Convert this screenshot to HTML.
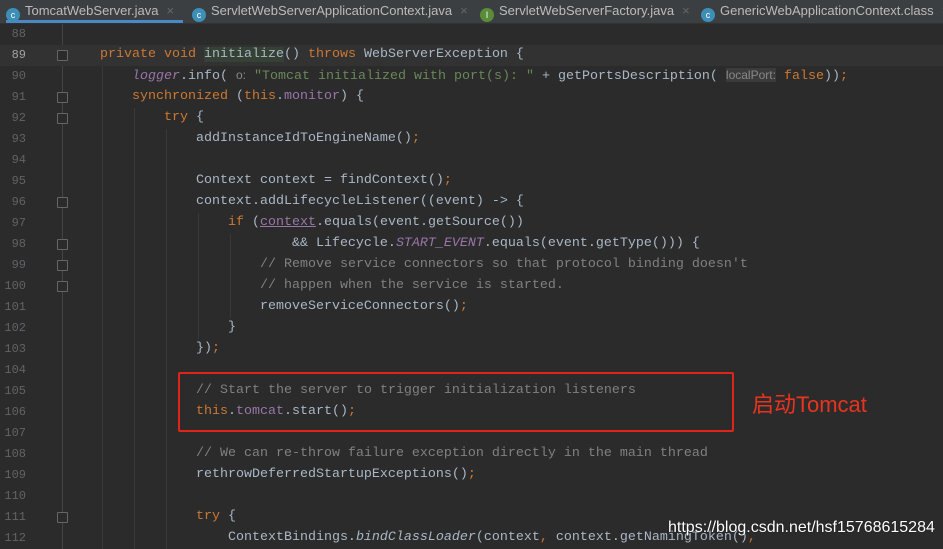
<!DOCTYPE html>
<html><head><meta charset="utf-8"><style>
body{margin:0;width:943px;height:549px;overflow:hidden;background:#2b2b2b;font-family:"Liberation Mono",monospace;}
.tabs{position:absolute;left:0;top:0;width:943px;height:23px;background:#3c3f41;border-bottom:1px solid #323232;font-family:"Liberation Sans",sans-serif;font-size:13px;color:#bbb;}
.tab{position:absolute;top:0;height:23px;line-height:22px;white-space:nowrap}
.ic{display:inline-block;width:14px;height:14px;border-radius:50%;background:#3d8fb7;vertical-align:-3px;margin-right:5px;color:#fff;font-size:9px;line-height:14px;text-align:center}
.x{color:#666;margin-left:8px}
.ln{position:absolute;left:0;width:26px;text-align:right;font-size:12px;color:#606366}
.code{position:absolute;left:0;white-space:pre;font-size:13.33px;color:#a9b7c6}
.k{color:#cc7832}.s{color:#6a8759}.c{color:#808080}.f{color:#9876aa}.i{font-style:italic}
.guide{position:absolute;width:1px;background:#393939}
.fold{position:absolute;left:57px;width:9px;height:9px;border:1px solid #666;background:#2b2b2b;border-radius:1px}
</style></head><body>
<div class="tabs">
<div class="tab" style="left:6px;width:177px;border-bottom:3px solid #4a88c7;height:20px"><span class="ic">c</span>TomcatWebServer.java<span class="x">×</span></div>
<div class="tab" style="left:192px"><span class="ic">c</span>ServletWebServerApplicationContext.java<span class="x">×</span></div>
<div class="tab" style="left:480px"><span class="ic" style="background:#5a8d3a">I</span>ServletWebServerFactory.java<span class="x">×</span></div>
<div class="tab" style="left:701px"><span class="ic">c</span>GenericWebApplicationContext.class<span class="x">×</span></div>
</div>
<div style="position:absolute;left:62px;top:24px;width:1px;height:525px;background:#444"></div>
<div style="position:absolute;left:0;top:45px;width:943px;height:21px;background:#323232"></div>
<div class="fold" style="top:50px"></div>
<div class="fold" style="top:92px"></div>
<div class="fold" style="top:113px"></div>
<div class="fold" style="top:197px"></div>
<div class="fold" style="top:239px"></div>
<div class="fold" style="top:260px"></div>
<div class="fold" style="top:281px"></div>
<div class="fold" style="top:512px"></div>
<div class="guide" style="left:102px;top:66px;height:483px"></div>
<div class="guide" style="left:134px;top:108px;height:441px"></div>
<div class="guide" style="left:166px;top:129px;height:420px"></div>
<div class="guide" style="left:198px;top:213px;height:126px"></div>
<div class="guide" style="left:230px;top:234px;height:84px"></div>
<div id="c"></div>
<div style="position:absolute;left:178px;top:372px;width:552px;height:56px;border:2px solid #e0241a;border-radius:2px"></div>
<div style="position:absolute;left:752px;top:387px;font-family:'Liberation Sans','Noto Sans CJK SC',sans-serif;font-size:22px;color:#e8341f">启动Tomcat</div>
<div style="position:absolute;left:668px;top:519px;font-family:'Liberation Sans',sans-serif;font-size:16px;color:#fff;text-shadow:0 0 1px #000">https://blog.csdn.net/hsf15768615284</div>
<script>
var L=[
"",
'    <span class="k">private void</span> <span style="background:#344134">initialize</span>() <span class="k">throws</span> WebServerException {',
'        <span class="f i">logger</span>.info( <span style="color:#888;font-family:Liberation Sans;font-size:12px">o:</span> <span class="s">"Tomcat initialized with port(s): "</span> + getPortsDescription( <span style="color:#888;font-family:Liberation Sans;font-size:12px;background:#3b3b3b">localPort:</span> <span class="k">false</span>))<span class="k">;</span>',
'        <span class="k">synchronized</span> (<span class="k">this</span>.<span class="f">monitor</span>) {',
'            <span class="k">try</span> {',
'                addInstanceIdToEngineName()<span class="k">;</span>',
'',
'                Context context = findContext()<span class="k">;</span>',
'                context.addLifecycleListener((event) -> {',
'                    <span class="k">if</span> (<span class="f" style="text-decoration:underline">context</span>.equals(event.getSource())',
'                            && Lifecycle.<span class="f i">START_EVENT</span>.equals(event.getType())) {',
'                        <span class="c">// Remove service connectors so that protocol binding doesn\'t</span>',
'                        <span class="c">// happen when the service is started.</span>',
'                        removeServiceConnectors()<span class="k">;</span>',
'                    }',
'                })<span class="k">;</span>',
'',
'                <span class="c">// Start the server to trigger initialization listeners</span>',
'                <span class="k">this</span>.<span class="f">tomcat</span>.start()<span class="k">;</span>',
'',
'                <span class="c">// We can re-throw failure exception directly in the main thread</span>',
'                rethrowDeferredStartupExceptions()<span class="k">;</span>',
'',
'                <span class="k">try</span> {',
'                    ContextBindings.<span class="i">bindClassLoader</span>(context<span class="k">,</span> context.getNamingToken()<span class="k">,</span>'
];
var h='';
for(var n=0;n<L.length;n++){var y=24+n*21;
h+='<div class="ln" style="top:'+(y+3)+'px;'+(n==1?'color:#a4a3a3':'')+'">'+(88+n)+'</div>';
h+='<div class="code" style="left:68px;top:'+(y+2)+'px">'+L[n]+'</div>';}
document.getElementById('c').innerHTML=h;
</script>
</body></html>
